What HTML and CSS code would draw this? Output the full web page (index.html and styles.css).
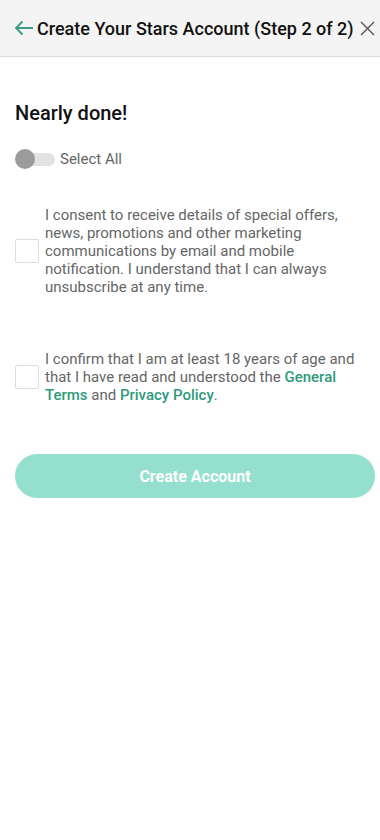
FILE: index.html
```html
<!DOCTYPE html>
<html>
<head>
<meta charset="utf-8">
<link rel="stylesheet" href="styles.css">
</head>
<body>
<header class="topbar">
  <svg class="back" width="20" height="16" viewBox="0 0 20 16"><path d="M19 8H2M8.5 1.5L2 8l6.5 6.5" fill="none" stroke="#3f9c84" stroke-width="1.8"/></svg>
  <h1 class="title">Create Your Stars Account (Step 2 of 2)</h1>
  <svg class="close" width="15" height="15" viewBox="0 0 15 15"><path d="M1 1L14 14M14 1L1 14" fill="none" stroke="#555" stroke-width="1.4"/></svg>
</header>
<main class="content">
  <h2 class="heading">Nearly done!</h2>
  <div class="toggle-row">
    <span class="toggle"><span class="track"></span><span class="knob"></span></span>
    <span class="toggle-label">Select All</span>
  </div>
  <label class="check-row first">
    <span class="box"></span>
    <span class="check-text">I consent to receive details of special offers, news, promotions and other marketing communications by email and mobile notification. I understand that I can always unsubscribe at any time.</span>
  </label>
  <label class="check-row second">
    <span class="box"></span>
    <span class="check-text">I confirm that I am at least 18 years of age and that I have read and understood the <a class="link">General Terms</a> and <a class="link">Privacy Policy</a>.</span>
  </label>
  <button class="submit">Create Account</button>
</main>
</body>
</html>
```
FILE: styles.css
```css
* { box-sizing: border-box; }
body { margin: 0; font-family: Roboto, "Liberation Sans", sans-serif; background: #fff; color: #222; }
.topbar { height: 57px; background: #f4f4f4; border-bottom: 1px solid #dcdcdc; display: flex; align-items: center; padding: 0 8px 0 14px; }
.back { flex: none; }
.title { margin: 0 0 0 3px; font-size: 18px; font-weight: 500; color: #111; white-space: nowrap; }
.close { flex: none; margin-left: 6px; }
.content { padding: 0 5px 0 15px; }
.heading { margin: 44px 0 0; font-size: 20px; font-weight: 500; color: #111; line-height: 24px; }
.toggle-row { display: flex; align-items: center; margin-top: 24px; height: 20px; }
.toggle { position: relative; width: 40px; height: 20px; flex: none; }
.track { position: absolute; left: 6px; right: 0; top: 4px; height: 13px; border-radius: 7px; background: #e2e2e2; }
.knob { position: absolute; left: 0; top: 0; width: 20px; height: 20px; border-radius: 50%; background: #9b9b9b; }
.toggle-label { margin-left: 5px; font-size: 15px; color: #666; }
.check-row { display: flex; align-items: center; }
.check-row.first { margin-top: 37px; }
.check-row.second { margin-top: 54px; }
.box { flex: none; width: 24px; height: 24px; border: 1px solid #ddd; border-radius: 2px; background: #fff; }
.check-text { margin-left: 6px; font-size: 15px; line-height: 18px; color: #666; }
.link { color: #2f9a7c; font-weight: 500; }
.submit { display: block; width: 360px; height: 44px; margin-top: 50px; border: none; border-radius: 22px; background: #94dfcd; color: #fff; font-family: Roboto, "Liberation Sans", sans-serif; font-size: 16px; font-weight: 700; }
```
